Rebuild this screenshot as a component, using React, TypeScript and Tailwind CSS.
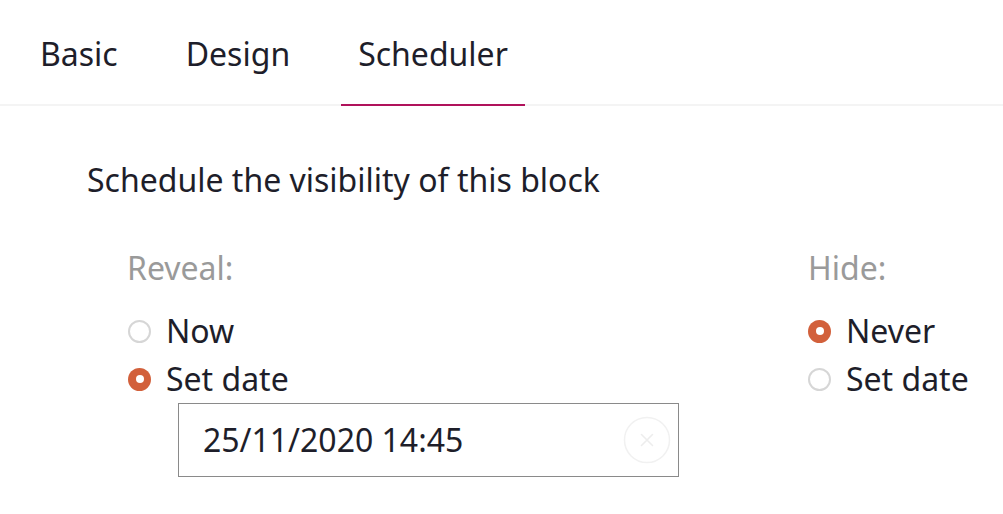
import React, { useState } from "react";

const tabs = ["Basic", "Design", "Scheduler"];

const Radio = ({ checked, label, onClick }: { checked: boolean; label: string; onClick: () => void }) => (
  <button type="button" onClick={onClick} className="flex items-center h-[48px] text-[32px] leading-[44px] text-[#1e1e2a]">
    {checked ? (
      <span className="w-[23px] h-[23px] rounded-full bg-[#d2603b] flex items-center justify-center">
        <span className="w-[8px] h-[8px] rounded-full bg-white" />
      </span>
    ) : (
      <span className="w-[23px] h-[23px] rounded-full border-2 border-[#d6d6d6] bg-white" />
    )}
    <span className="ml-[15px]">{label}</span>
  </button>
);

export default function App() {
  const [active, setActive] = useState("Scheduler");
  const [reveal, setReveal] = useState("date");
  const [hide, setHide] = useState("never");

  return (
    <div className="w-[1003px] h-[514px] bg-white overflow-hidden" style={{ fontFamily: '"Noto Sans", sans-serif' }}>
      <div className="flex items-start h-[106px] border-b-2 border-[#f4f4f4] pl-[23px] gap-[34px]">
        {tabs.map((t) => (
          <button
            key={t}
            type="button"
            onClick={() => setActive(t)}
            className={
              "px-[17px] pt-[32px] pb-[28px] text-[32px] leading-[44px] text-[#1e1e2a] border-b-2 " +
              (active === t ? "border-[#b0125b]" : "border-transparent")
            }
          >
            {t}
          </button>
        ))}
      </div>

      <div className="pl-[87px] pt-[52px]">
        <p className="text-[32px] text-[#1e1e2a] leading-[44px]">Schedule the visibility of this block</p>

        <div className="flex mt-[44px]">
          <div className="pl-[41px] w-[721px]">
            <p className="text-[32px] text-[#9a9a9a] leading-[44px] mb-[17px] -ml-[1px]">Reveal:</p>
            <Radio checked={reveal === "now"} label="Now" onClick={() => setReveal("now")} />
            <Radio checked={reveal === "date"} label="Set date" onClick={() => setReveal("date")} />
            <div className="ml-[50px] w-[501px] h-[74px] border border-[#8a8a8a] flex items-center pl-[24px] pr-[7px]">
              <span className="flex-1 text-[32px] leading-[44px] text-[#1e1e2a]">25/11/2020 14:45</span>
              <svg width="48" height="48" viewBox="0 0 48 48" fill="none">
                <circle cx="24" cy="24" r="22.5" stroke="#f1f1f1" strokeWidth="1.5" />
                <path d="M18.5 18.5l11 11M29.5 18.5l-11 11" stroke="#ededed" strokeWidth="1.6" strokeLinecap="round" />
              </svg>
            </div>
          </div>
          <div>
            <p className="text-[32px] text-[#9a9a9a] leading-[44px] mb-[17px]">Hide:</p>
            <Radio checked={hide === "never"} label="Never" onClick={() => setHide("never")} />
            <Radio checked={hide === "date"} label="Set date" onClick={() => setHide("date")} />
          </div>
        </div>
      </div>
    </div>
  );
}
